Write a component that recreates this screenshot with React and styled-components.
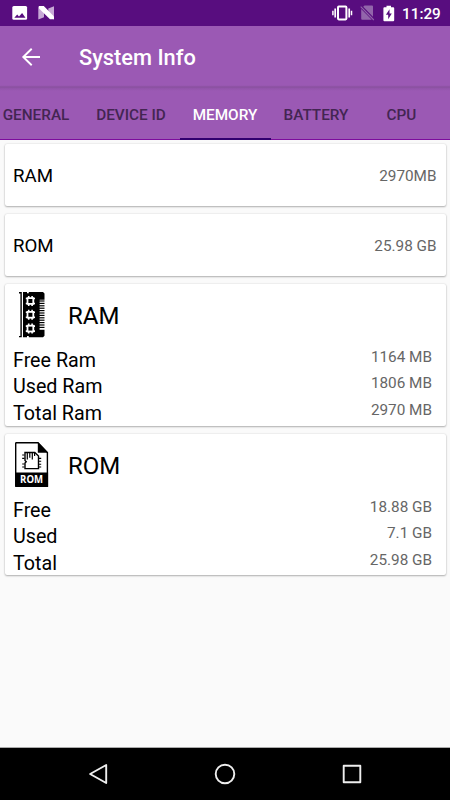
import React from 'react';
import styled, { createGlobalStyle } from 'styled-components';

const GlobalStyle = createGlobalStyle`
  * { box-sizing: border-box; }
  body { margin: 0; background: #fafafa; font-family: Roboto, "Liberation Sans", sans-serif; }
  svg { display: block; flex: none; }
`;

const Screen = styled.div`
  width: 450px;
  height: 800px;
  display: flex;
  flex-direction: column;
  overflow: hidden;
  background: #fafafa;
`;

const StatusBar = styled.header`
  height: 26px;
  flex: none;
  display: flex;
  align-items: center;
  padding: 0 9px 0 12px;
  background: #580d7f;
  color: #fff;
`;

const StatusGroup = styled.div`
  display: flex;
  align-items: center;
  margin-left: ${(p) => (p.$end ? 'auto' : '0')};
`;

const Clock = styled.span`
  width: 39px;
  margin-left: 7px;
  font-size: 15.3px;
  font-weight: 500;
  line-height: 26px;
  padding-top: 1px;
  white-space: nowrap;
`;

const Toolbar = styled.div`
  height: 62px;
  flex: none;
  display: flex;
  align-items: center;
  padding: 0 22px 0 21px;
  background: linear-gradient(#9b59b4 0 59px, #9656ae 60px, #87509c 61px, #9154a8 62px);
`;

const Title = styled.h1`
  margin: 2px 0 0 38px;
  color: #fff;
  font-size: 21.8px;
  line-height: 30px;
  font-weight: 500;
`;

const TabBar = styled.nav`
  height: 52px;
  flex: none;
  display: flex;
  background: linear-gradient(#9154a9 0, #9b59b4 3px 51px, #7d0c9d 51px);
  overflow: hidden;
`;

const Tab = styled.div`
  width: ${(p) => p.$width}px;
  margin-left: ${(p) => p.$offset || 0}px;
  flex: none;
  display: flex;
  justify-content: center;
  font-size: 15.3px;
  font-weight: 500;
  line-height: 54px;
  white-space: nowrap;
  color: ${(p) => (p.$active ? '#fff' : '#432552')};
  box-shadow: ${(p) => (p.$active ? 'inset 0 -2px #31006f' : 'none')};
`;

const Content = styled.main`
  flex: 1;
  display: flex;
  flex-direction: column;
  gap: 8px;
  padding: 4px 4.5px 0 4.5px;
`;

const Card = styled.section`
  height: ${(p) => p.$height}px;
  flex: none;
  background: #fff;
  border-radius: 2px;
  box-shadow: 0 1px 2px rgba(0, 0, 0, 0.28), 0 0 2px rgba(0, 0, 0, 0.14);
`;

const SummaryCard = styled(Card)`
  display: flex;
  align-items: center;
  justify-content: space-between;
  padding: 1px 9px 0 8.5px;
`;

const Label = styled.span`
  color: #000;
  font-size: 19.7px;
  line-height: 26.5px;
`;

const SummaryLabel = styled(Label)`
  font-size: 18.7px;
  padding-top: 2px;
`;

const Value = styled.span`
  color: #666;
  font-size: 15.3px;
  line-height: 20px;
`;

const DetailValue = styled(Value)`
  line-height: 18px;
`;

const CardHeader = styled.div`
  height: 63.5px;
  display: flex;
  align-items: flex-start;
  padding: 7px 0 0 9.5px;
`;

const Heading = styled.h2`
  margin: 9px 0 0 18px;
  color: #000;
  font-size: 24px;
  line-height: 32px;
  font-weight: 400;
`;

const DetailRow = styled.div`
  height: 26.6px;
  display: flex;
  align-items: flex-start;
  justify-content: space-between;
  padding: 0 13.5px 0 8.5px;
`;

const PictureIcon = () => (
  <svg width="16" height="16" viewBox="0 0 16 16">
    <rect x="0.3" y="1" width="14.8" height="13.8" rx="1.5" fill="#fff" />
    <path d="M2.3 12.7 5.2 9.4 7 11.5 10.1 8 13.5 12.7Z" fill="#580d7f" />
  </svg>
);

const NougatIcon = styled(({ className }) => (
  <svg className={className} width="17" height="16" viewBox="0 0 17 16">
    <path d="M0.3 1.2 6 5V12.2L0.3 14.5ZM16 1.2V14.5L10.3 10V3.5Z" fill="#c7a9d6" />
    <path d="M1 1H5.8L16 11.5V14.3H12L1 3.5Z" fill="#fff" />
  </svg>
))`
  margin-left: 10px;
`;

const VibrateIcon = () => (
  <svg width="21" height="18" viewBox="0 0 21 18">
    <rect x="6" y="2.6" width="8.4" height="12.8" rx="0.8" fill="none" stroke="#fff" strokeWidth="2" />
    <path d="M3.2 4.5V13.4M17.2 4.5V13.4" stroke="#fff" strokeWidth="1.7" />
    <path d="M0.9 6.8V11.2M19.5 6.8V11.2" stroke="#fff" strokeWidth="1.5" />
  </svg>
);

const NoSimIcon = styled(({ className }) => (
  <svg className={className} width="15" height="16" viewBox="0 0 15 16">
    <path d="M4.5 0.5H12Q13 0.5 13 1.5V11.7L3.2 1.8ZM1.2 4 11.8 14.8H2.2Q1.2 14.8 1.2 13.8Z" fill="#9265ab" />
    <path d="M0.7 1.7 13.8 15" stroke="#9265ab" strokeWidth="1.1" />
  </svg>
))`
  margin-left: 7px;
`;

const BatteryIcon = styled(({ className }) => (
  <svg className={className} width="12" height="17" viewBox="0 0 12 17">
    <path d="M3.5 0.8H8V2.2H10.2Q11.2 2.2 11.2 3.2V15.2Q11.2 16.2 10.2 16.2H1.4Q0.4 16.2 0.4 15.2V3.2Q0.4 2.2 1.4 2.2H3.5Z" fill="#fff" />
    <path d="M6.5 4.2 2.9 9.8H5.2V14.2L8.8 8.4H6.5Z" fill="#580d7f" />
  </svg>
))`
  margin-left: 8px;
`;

const BackIcon = () => (
  <svg width="20" height="20" viewBox="0 0 20 20" fill="none" stroke="#fff" strokeWidth="1.9">
    <path d="M19 10H2.3M10.7 1.8 2.3 10 10.7 18.2" />
  </svg>
);

const RamIcon = () => (
  <svg width="36" height="48" viewBox="0 0 36 48">
    <path d="M9 1H13V2.2H14.8V1H29L30.5 2.5V8.8H25.6V38.8H30.5V44.8L29 46.3H14.8V45H13V46.3H9Z" />
    <path d="M5 1.7H7.1V45.6H5" fill="none" stroke="#000" strokeWidth="1.4" />
    {[10, 12.4, 14.8, 17.2, 19.6, 22, 24.4, 26.8, 29.2, 31.6, 34, 36.4].map((y) => (
      <path key={y} d={`M25 ${y}H30.5`} stroke="#000" strokeWidth="1.2" />
    ))}
    {[10, 23.8, 37.6].map((y) => (
      <g key={y} transform={`translate(16.4 ${y})`}>
        <rect x="-2.9" y="-2.9" width="5.8" height="5.8" fill="#000" stroke="#fff" strokeWidth="1.8" />
        <path d="M-1.7-5V-3M1.7-5V-3M-1.7 3V5M1.7 3V5M-4.6-2.5H-3M-4.6 2.5H-3M3-2.5H4.6M3 2.5H4.6" stroke="#fff" strokeWidth="1.6" />
      </g>
    ))}
  </svg>
);

const RomIcon = () => (
  <svg width="36" height="48" viewBox="0 0 36 48">
    <path d="M2.4 1.8H24L33.4 11.5V45.3H2.4Q1.7 45.3 1.7 44.5V2.5Q1.7 1.8 2.4 1.8Z" fill="#fff" stroke="#000" strokeWidth="1.4" />
    <path d="M23.8 1 34 11.8H23.8Z" />
    <path d="M1 31.5H34.1V45.5L33.3 46H1.8L1 45.2Z" />
    <path d="M11 11.5H20.8L24.5 15V27.6H11V22L12.2 20.8 11 19.5Z" fill="none" stroke="#000" strokeWidth="1.4" />
    <path d="M13.3 11.5V18.5M15.8 11.5V16.8M18.3 11.5V18.5M20.6 12V15" stroke="#000" strokeWidth="1.2" />
    <path d="M8.2 14H10.5M8.2 17.4H10.5M8.2 23H10.5M8.2 26H10.5M25 17.4H27.2M25 20.3H27.2M25 23.2H27.2M25 26H27.2" stroke="#000" strokeWidth="1.1" />
    <text x="17.6" y="42" textAnchor="middle" textLength="23" lengthAdjust="spacingAndGlyphs" fill="#fff" fontFamily="Open Sans, sans-serif" fontWeight="700" fontSize="10.5">ROM</text>
  </svg>
);

const NavigationBar = styled.footer`
  height: 53px;
  flex: none;
  display: grid;
  grid-template-columns: repeat(3, 126.7px);
  justify-content: center;
  align-items: center;
  justify-items: center;
  border-top: 1px solid #aaa;
  background: #000;
`;

const NavIcon = styled.svg`
  width: 24px;
  height: 24px;
  fill: none;
  stroke: #eee;
  stroke-width: 1.9;
  stroke-linejoin: round;
`;

const tabs = [
  { name: 'GENERAL', width: 93, offset: -10.5 },
  { name: 'DEVICE ID', width: 97 },
  { name: 'MEMORY', width: 91, active: true },
  { name: 'BATTERY', width: 91 },
  { name: 'CPU', width: 80 },
];

const groups = [
  {
    title: 'RAM', Icon: RamIcon, height: 142,
    rows: [['Free Ram', '1164 MB'], ['Used Ram', '1806 MB'], ['Total Ram', '2970 MB']],
  },
  {
    title: 'ROM', Icon: RomIcon, height: 141,
    rows: [['Free', '18.88 GB'], ['Used', '7.1 GB'], ['Total', '25.98 GB']],
  },
];

export default function App() {
  return (
    <Screen>
      <GlobalStyle />
      <StatusBar>
        <StatusGroup><PictureIcon /><NougatIcon /></StatusGroup>
        <StatusGroup $end>
          <VibrateIcon /><NoSimIcon /><BatteryIcon />
          <Clock>11:29</Clock>
        </StatusGroup>
      </StatusBar>
      <Toolbar><BackIcon /><Title>System Info</Title></Toolbar>
      <TabBar>
        {tabs.map((t) => (
          <Tab key={t.name} $width={t.width} $offset={t.offset} $active={t.active}>{t.name}</Tab>
        ))}
      </TabBar>
      <Content>
        <SummaryCard $height={62}><SummaryLabel>RAM</SummaryLabel><Value>2970MB</Value></SummaryCard>
        <SummaryCard $height={62}><SummaryLabel>ROM</SummaryLabel><Value>25.98 GB</Value></SummaryCard>
        {groups.map(({ title, Icon, height, rows }) => (
          <Card key={title} $height={height}>
            <CardHeader><Icon /><Heading>{title}</Heading></CardHeader>
            {rows.map(([label, value]) => (
              <DetailRow key={label}><Label>{label}</Label><DetailValue>{value}</DetailValue></DetailRow>
            ))}
          </Card>
        ))}
      </Content>
      <NavigationBar>
        <NavIcon viewBox="0 0 24 24"><path d="M20.2 3V21L4.1 12Z" /></NavIcon>
        <NavIcon viewBox="0 0 24 24"><circle cx="12" cy="12" r="9.3" /></NavIcon>
        <NavIcon viewBox="0 0 24 24"><rect x="3.7" y="3.7" width="16.6" height="16.6" /></NavIcon>
      </NavigationBar>
    </Screen>
  );
}
